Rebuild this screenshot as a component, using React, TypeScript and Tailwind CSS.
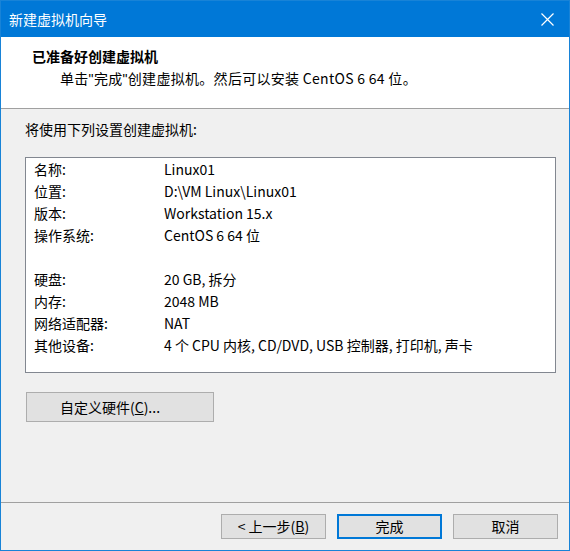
import React from 'react';

const rows: [string, string][] = [
  ['名称:', 'Linux01'],
  ['位置:', 'D:\\VM Linux\\Linux01'],
  ['版本:', 'Workstation 15.x'],
  ['操作系统:', 'CentOS 6 64 位'],
  ['', ''],
  ['硬盘:', '20 GB, 拆分'],
  ['内存:', '2048 MB'],
  ['网络适配器:', 'NAT'],
  ['其他设备:', '4 个 CPU 内核, CD/DVD, USB 控制器, 打印机, 声卡'],
];

const font = { fontFamily: '"Noto Sans CJK SC", "Liberation Sans", sans-serif' };

export default function App() {
  return (
    <div style={font} className="w-[570px] h-[551px] border border-[#1883d7] flex flex-col text-[14px] text-black bg-[#f0f0f0]">
      {/* title bar */}
      <div className="h-[36px] bg-[#0078d7] flex items-center justify-between pl-[8px] pr-[15px] text-white">
        <span className="text-[14px] leading-none">新建虚拟机向导</span>
        <svg width="13" height="13" viewBox="0 0 13 13" className="mt-[1px]">
          <path d="M0.5 0.5 L12.5 12.5 M12.5 0.5 L0.5 12.5" stroke="white" strokeWidth="1.2" fill="none" />
        </svg>
      </div>

      {/* header */}
      <div className="h-[72px] bg-white border-b border-[#a0a0a0] flex flex-col pt-[9px] pl-[31px]">
        <div className="font-bold leading-[20px]">已准备好创建虚拟机</div>
        <div className="pl-[28px] leading-[20px] mt-[2px] tracking-[0.3px]">
          单击<span style={{ fontFamily: '"Liberation Sans", sans-serif' }}>"</span>完成<span style={{ fontFamily: '"Liberation Sans", sans-serif' }}>"</span>创建虚拟机。然后可以安装 CentOS 6 64 位。
        </div>
      </div>

      {/* body */}
      <div className="flex-1 flex flex-col pl-[24px]">
        <div className="mt-[10px] leading-[20px]">将使用下列设置创建虚拟机:</div>
        <div className="mt-[18px] w-[531px] h-[216px] bg-white border border-[#828790] pl-[8px]">
          {rows.map(([k, v], i) => (
            <div key={i} className="flex h-[22px] items-center">
              <span className="w-[130px] shrink-0">{k}</span>
              <span className="whitespace-nowrap">{v}</span>
            </div>
          ))}
        </div>
        <button className="mt-[19px] ml-[1px] w-[188px] h-[30px] bg-[#e1e1e1] border border-[#adadad] flex items-center justify-center pr-[20px]">
          自定义硬件(<span className="underline">C</span>)...
        </button>
      </div>

      {/* footer */}
      <div className="h-[48px] border-t border-[#a0a0a0] flex items-start justify-end gap-[11px] pr-[11px] pt-[11px]">
        <button className="w-[105px] h-[25px] bg-[#e1e1e1] border border-[#adadad] flex items-center justify-center">
          &lt; 上一步(<span className="underline">B</span>)
        </button>
        <button className="w-[105px] h-[25px] bg-[#e1e1e1] border-2 border-[#0078d7] flex items-center justify-center">
          完成
        </button>
        <button className="w-[105px] h-[25px] bg-[#e1e1e1] border border-[#adadad] flex items-center justify-center">
          取消
        </button>
      </div>
    </div>
  );
}
